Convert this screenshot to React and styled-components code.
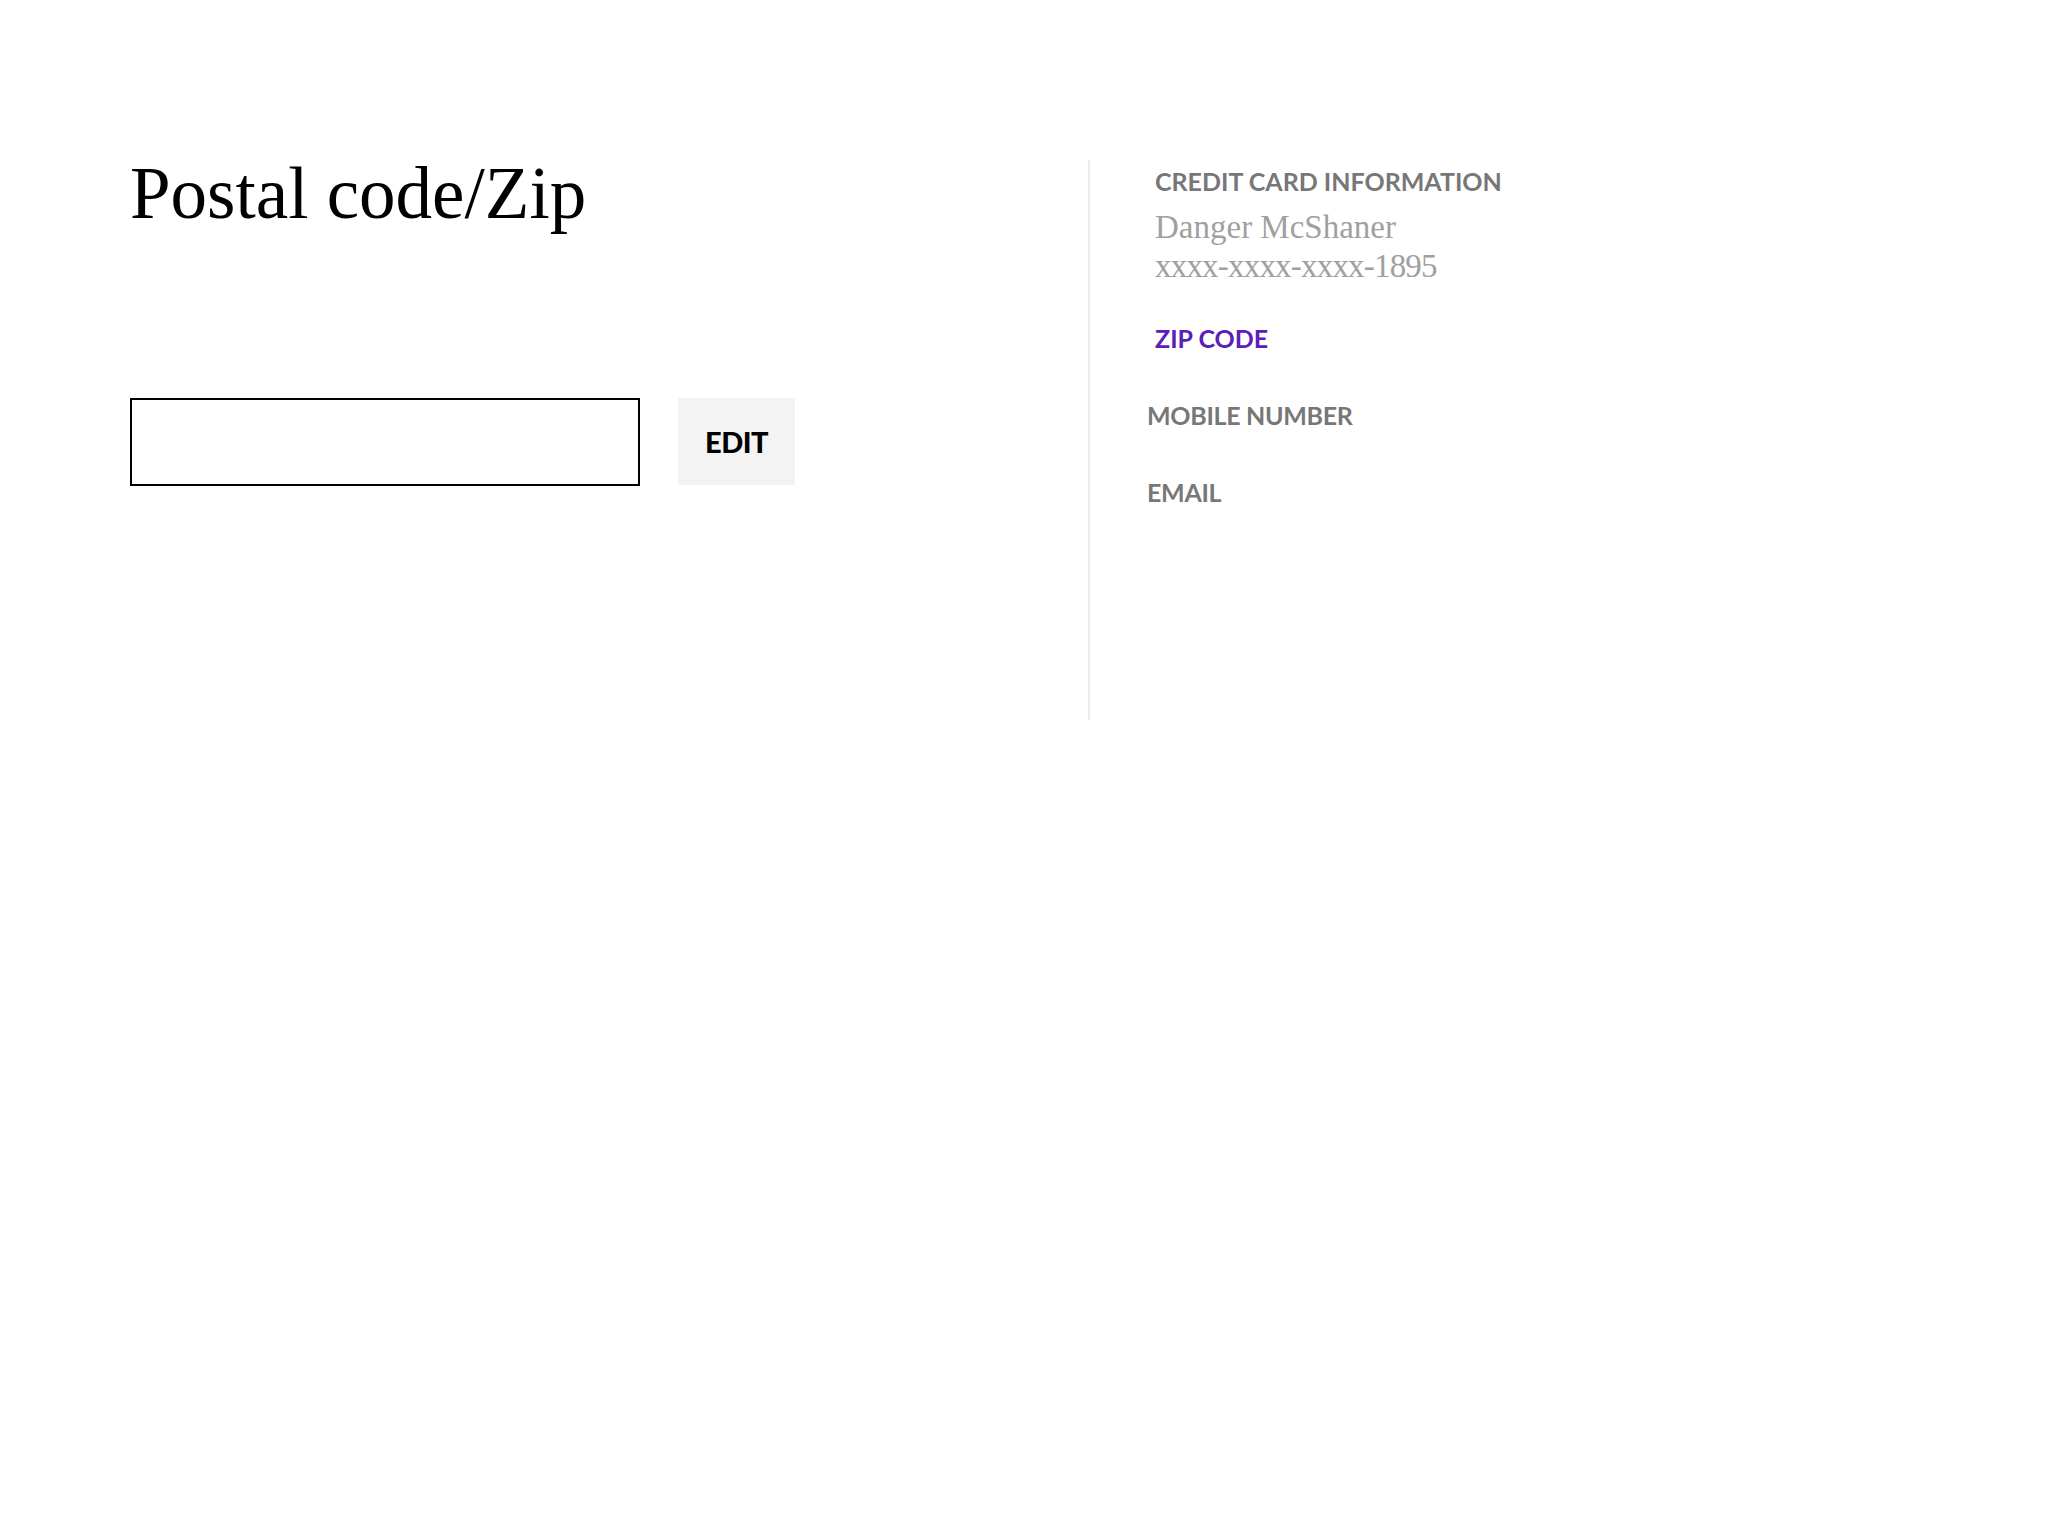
import React from "react";
import styled, { createGlobalStyle } from "styled-components";

const GlobalStyle = createGlobalStyle`
    body {
        margin: 0;
        background: #fff;
        font-family: "Lato", "Liberation Sans", sans-serif;
    }
`;

const Page = styled.main`
    display: flex;
    padding: 160px 0 0 130px;
`;

const FormColumn = styled.section`
    width: 958px;
`;

const Heading = styled.h1`
    margin: 0;
    font-family: "Liberation Serif", serif;
    font-weight: 400;
    font-size: 73px;
    line-height: 68px;
    color: #000;
`;

const FieldRow = styled.div`
    display: flex;
    gap: 38px;
    margin-top: 170px;
`;

const TextInput = styled.input`
    box-sizing: border-box;
    width: 510px;
    height: 88px;
    border: 2px solid #000;
    border-radius: 0;
    padding: 0 20px;
    font-size: 28px;
    outline: none;
`;

const EditButton = styled.button`
    width: 117px;
    height: 87px;
    border: none;
    background: #f3f3f3;
    color: #000;
    font-family: "Lato", sans-serif;
    font-weight: 900;
    font-size: 29px;
    letter-spacing: -0.5px;
    cursor: pointer;
`;

const Summary = styled.aside`
    border-left: 2px solid #ebebeb;
    height: 560px;
    padding: 6px 0 0 65px;
    box-sizing: border-box;
`;

const Label = styled.div`
    font-family: "Lato", sans-serif;
    font-weight: 700;
    font-size: 25px;
    line-height: 30px;
    letter-spacing: ${({ tight }) => (tight ? "-0.3px" : "0")};
    color: ${({ active }) => (active ? "#5a20b8" : "#777")};
    margin-top: ${({ gap }) => gap || 0}px;
    margin-left: ${({ inset }) => inset || 0}px;
`;

const CardDetails = styled.div`
    margin-top: 12px;
`;

const CardLine = styled.div`
    font-family: "Liberation Serif", serif;
    font-size: 33px;
    line-height: 39px;
    letter-spacing: ${({ squeeze }) => (squeeze ? "-0.8px" : "0")};
    color: #a0a0a0;
`;

const App = () => (
    <>
        <GlobalStyle />
        <Page>
            <FormColumn>
                <Heading>Postal code/Zip</Heading>
                <FieldRow>
                    <TextInput type="text" />
                    <EditButton>EDIT</EditButton>
                </FieldRow>
            </FormColumn>
            <Summary>
                <Label>CREDIT CARD INFORMATION</Label>
                <CardDetails>
                    <CardLine>Danger McShaner</CardLine>
                    <CardLine squeeze>xxxx-xxxx-xxxx-1895</CardLine>
                </CardDetails>
                <Label active gap={37}>ZIP CODE</Label>
                <Label tight gap={47} inset={-8}>MOBILE NUMBER</Label>
                <Label tight gap={47} inset={-8}>EMAIL</Label>
            </Summary>
        </Page>
    </>
);

export default App;
